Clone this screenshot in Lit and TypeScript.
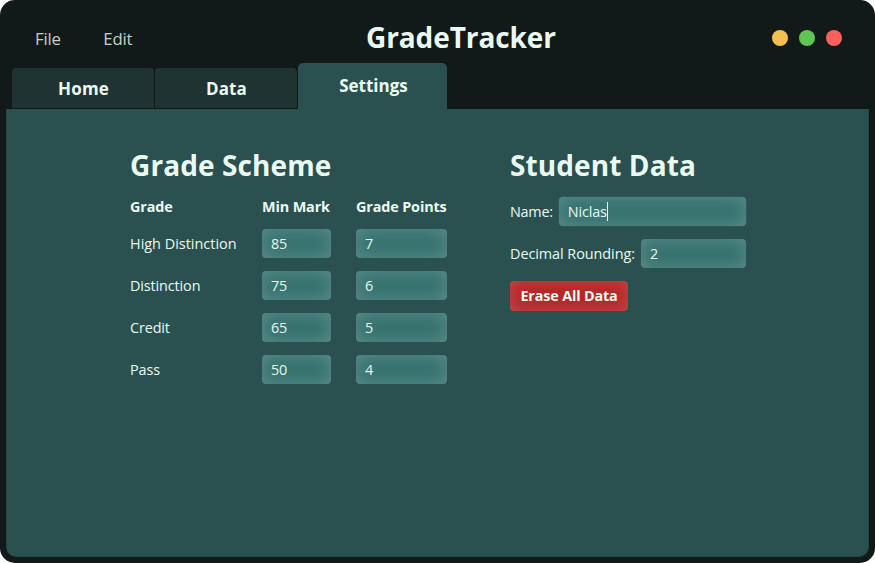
import { LitElement, html, css } from "lit";
import { customElement, property, state } from "lit/decorators.js";
import { classMap } from "lit/directives/class-map.js";

@customElement("grade-field")
class GradeField extends LitElement {
  @property() value = "";
  @property({ type: Boolean }) focused = false;

  static styles = css`
    :host { display: block; height: 29px; box-sizing: border-box; }
    .field {
      box-sizing: border-box; height: 100%; display: flex; align-items: center;
      padding: 0 9px; border-radius: 4px; background: #35726f;
      box-shadow: inset 0 0 18px rgba(135, 170, 164, 0.5);
      color: #e8f8ef; font: 14.4px "Open Sans", "Noto Sans", sans-serif;
    }
    .focused { box-shadow: inset 0 0 18px rgba(135, 170, 164, 0.5), 0 0 0 1px rgba(56, 117, 114, 0.3); }
    .text { letter-spacing: -0.28px; }
    .focused .text { letter-spacing: -0.13px; }
    .caret { width: 1px; height: 19px; background: #effff6; }
  `;

  render() {
    return html`<div class=${classMap({ field: true, focused: this.focused })}>
      <span class="text">${this.value}</span>${this.focused ? html`<span class="caret"></span>` : ""}
    </div>`;
  }
}

@customElement("app-root")
class AppRoot extends LitElement {
  @state() private active = "Settings";
  private tabs = ["Home", "Data", "Settings"];
  private grades = [
    ["High Distinction", "85", "7"],
    ["Distinction", "75", "6"],
    ["Credit", "65", "5"],
    ["Pass", "50", "4"],
  ];

  static styles = css`
    :host {
      display: block; width: 875px; height: 563px; background: #fff; overflow: hidden;
      font-family: "Open Sans", "Noto Sans", sans-serif; color: #ebfaf1;
    }
    .window {
      box-sizing: border-box; width: 100%; height: 100%; padding: 0 6px 6px;
      border-radius: 15px; background: #121a19; display: flex; flex-direction: column;
    }
    .bar { height: 63px; display: grid; grid-template-columns: 331px auto 1fr; align-items: center; padding: 0 27px 0 29px; }
    .menu { display: flex; gap: 42.5px; color: #c5d0ca; font-size: 16.8px; padding-top: 13px; }
    .menu .file { letter-spacing: -0.2px; }
    .menu .edit { letter-spacing: -0.2px; }
    .title { margin: 11px 0 0; font-size: 28px; line-height: 36px; font-weight: 700; letter-spacing: -0.1px; white-space: nowrap; }
    .dots { display: flex; gap: 11px; justify-content: flex-end; padding-top: 13px; }
    .dot { width: 16px; height: 16px; border-radius: 50%; }
    .yellow { background: #f5bf4f; }
    .green { background: #61c554; }
    .red { background: #ff605c; }
    .tabs { height: 46px; display: flex; align-items: flex-end; padding-left: 6px; gap: 1px; }
    .tab {
      box-sizing: border-box; width: 142px; height: 40px; margin-bottom: 1px; border-radius: 4px 4px 0 0;
      background: #1f3432; font-size: 17px; font-weight: 700; letter-spacing: 0.15px; padding-left: 1px;
      display: flex; align-items: center; justify-content: center;
    }
    .tab.active {
      width: 149px; height: 46px; margin-bottom: 0; padding: 0 0 2px 2px; background: #2a514f;
      border-radius: 5px 5px 0 0; letter-spacing: 0;
    }
    .panel {
      flex: 1; box-sizing: border-box; border: solid #244543; border-width: 0 1px 1px; border-radius: 0 0 10px 10px;
      background: #2a514f; padding: 37px 0 0 123px; display: flex; align-items: flex-start; gap: 63px;
    }
    h2 { margin: 0; font-size: 28px; line-height: 38px; font-weight: 700; white-space: nowrap; letter-spacing: 0.1px; }
    .scheme { width: 317px; }
    .table { display: grid; grid-template-columns: 107px 69px 91px; column-gap: 25px; row-gap: 13px; font-size: 14.4px; margin-top: 4px; }
    .cell { line-height: 29px; white-space: nowrap; letter-spacing: -0.12px; }
    .cell.long { letter-spacing: 0.02px; }
    .head { line-height: 24px; height: 24px; font-weight: 700; letter-spacing: -0.13px; margin-top: 7px; margin-bottom: -3px; }
    .student { width: 236px; }
    .row { display: flex; gap: 6px; align-items: center; height: 29px; margin-bottom: 13px; font-size: 14.4px; }
    .row.first { margin-top: 13px; }
    .row grade-field { flex: 1; }
    .label { white-space: nowrap; letter-spacing: -0.05px; }
    .first .label { letter-spacing: -0.25px; }
    .erase {
      width: 118px; height: 30px; padding: 0 0 2px; border: 0; border-radius: 4px; color: #ebfaf1; background: #b52427;
      box-shadow: inset 0 0 18px rgba(200, 105, 100, 0.58);
      font: 700 14.4px "Open Sans", "Noto Sans", sans-serif; letter-spacing: -0.16px; white-space: nowrap;
    }
  `;

  render() {
    return html`
      <div class="window">
        <header class="bar">
          <nav class="menu"><span class="file">File</span><span class="edit">Edit</span></nav>
          <h1 class="title">GradeTracker</h1>
          <div class="dots"><span class="dot yellow"></span><span class="dot green"></span><span class="dot red"></span></div>
        </header>
        <div class="tabs">
          ${this.tabs.map((t) => html`<div class=${classMap({ tab: true, active: t === this.active })} @click=${() => (this.active = t)}>${t}</div>`)}
        </div>
        <main class="panel">
          <section class="scheme">
            <h2>Grade Scheme</h2>
            <div class="table">
              ${["Grade", "Min Mark", "Grade Points"].map((h) => html`<span class="cell head">${h}</span>`)}
              ${this.grades.map(([name, mark, points]) => html`
                <span class=${classMap({ cell: true, long: name.length > 12 })}>${name}</span>
                <grade-field .value=${mark}></grade-field>
                <grade-field .value=${points}></grade-field>`)}
            </div>
          </section>
          <section class="student">
            <h2>Student Data</h2>
            <div class="row first"><span class="label">Name:</span><grade-field .value=${"Niclas"} focused></grade-field></div>
            <div class="row"><span class="label">Decimal Rounding:</span><grade-field .value=${"2"}></grade-field></div>
            <button class="erase">Erase All Data</button>
          </section>
        </main>
      </div>
    `;
  }
}
